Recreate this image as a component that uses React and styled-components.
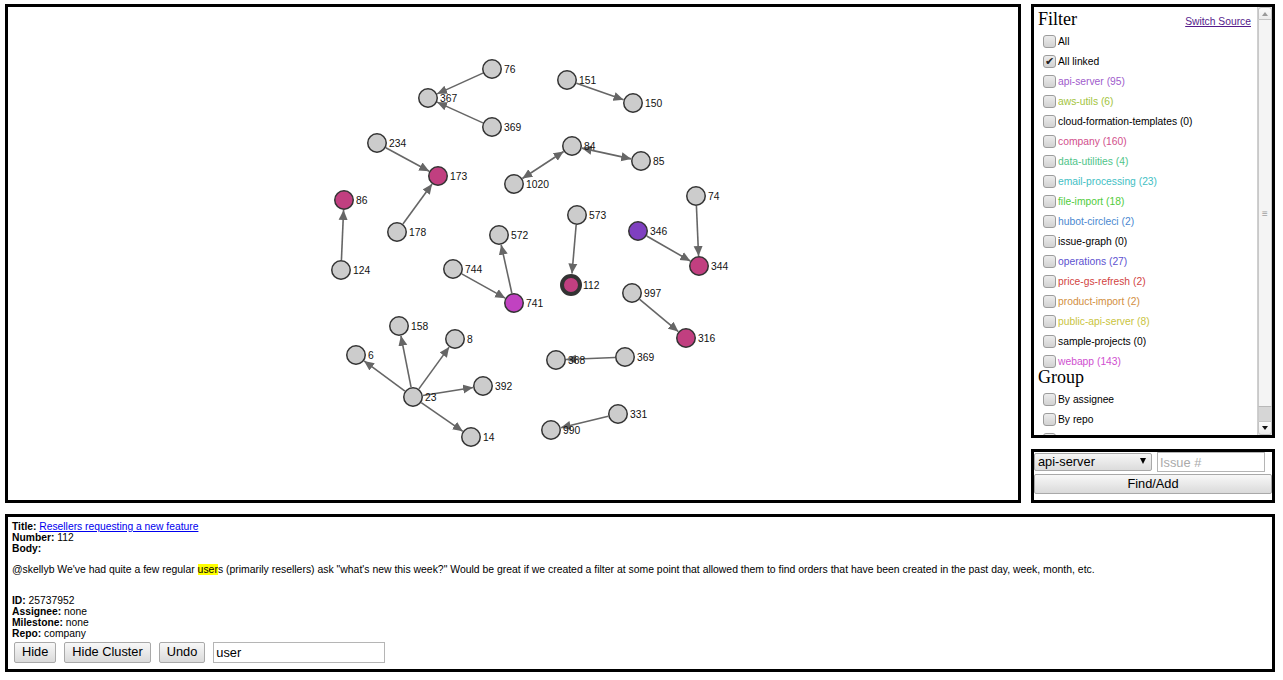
import React from 'react';
import styled, { createGlobalStyle } from 'styled-components';

const GlobalStyle = createGlobalStyle`
  html, body {
    margin: 0;
    padding: 0;
    background: #fff;
    font-family: "Liberation Sans", Arial, sans-serif;
    color: #000;
  }
`;

const PINK = '#c13f80';
const PURPLE = '#7f40c0';
const MAGENTA = '#c142c1';

const NODES = [
  { id: '76', x: 492, y: 69 },
  { id: '367', x: 428, y: 98 },
  { id: '369a', label: '369', x: 492, y: 127 },
  { id: '151', x: 567, y: 80 },
  { id: '150', x: 633, y: 103 },
  { id: '234', x: 377, y: 143 },
  { id: '173', x: 438, y: 176, fill: PINK },
  { id: '84', x: 572, y: 146 },
  { id: '85', x: 641, y: 161 },
  { id: '1020', x: 514, y: 184 },
  { id: '86', x: 344, y: 200, fill: PINK },
  { id: '178', x: 397, y: 232 },
  { id: '124', x: 341, y: 270 },
  { id: '573', x: 577, y: 215 },
  { id: '572', x: 499, y: 235 },
  { id: '346', x: 638, y: 231, fill: PURPLE },
  { id: '74', x: 696, y: 196 },
  { id: '344', x: 699, y: 266, fill: PINK },
  { id: '744', x: 453, y: 269 },
  { id: '741', x: 514, y: 303, fill: MAGENTA },
  { id: '112', x: 571, y: 285, fill: PINK, selected: true },
  { id: '997', x: 632, y: 293 },
  { id: '316', x: 686, y: 338, fill: PINK },
  { id: '158', x: 399, y: 326 },
  { id: '8', x: 455, y: 339 },
  { id: '6', x: 356, y: 355 },
  { id: '392', x: 483, y: 386 },
  { id: '23', x: 413, y: 397 },
  { id: '14', x: 471, y: 437 },
  { id: '368', x: 556, y: 360 },
  { id: '369b', label: '369', x: 625, y: 357 },
  { id: '331', x: 618, y: 414 },
  { id: '990', x: 551, y: 430 },
];

// [source, target, arrows on both ends]
const EDGES = [
  ['76', '367'],
  ['369a', '367'],
  ['151', '150'],
  ['234', '173'],
  ['178', '173'],
  ['84', '1020', true],
  ['84', '85', true],
  ['124', '86'],
  ['573', '112'],
  ['741', '572'],
  ['744', '741'],
  ['74', '344'],
  ['346', '344'],
  ['997', '316'],
  ['23', '158'],
  ['23', '8'],
  ['23', '6'],
  ['23', '392'],
  ['23', '14'],
  ['369b', '368'],
  ['331', '990'],
];

const REPOS = [
  { name: 'api-server', count: 95, color: '#a05ccc' },
  { name: 'aws-utils', count: 6, color: '#a3c43c' },
  { name: 'cloud-formation-templates', count: 0 },
  { name: 'company', count: 160, color: '#d24f8c' },
  { name: 'data-utilities', count: 4, color: '#4fc489' },
  { name: 'email-processing', count: 23, color: '#43c0c4' },
  { name: 'file-import', count: 18, color: '#52cc3c' },
  { name: 'hubot-circleci', count: 2, color: '#4a88d0' },
  { name: 'issue-graph', count: 0 },
  { name: 'operations', count: 27, color: '#5d52d0' },
  { name: 'price-gs-refresh', count: 2, color: '#d2443f' },
  { name: 'product-import', count: 2, color: '#d2903f' },
  { name: 'public-api-server', count: 8, color: '#c9c43e' },
  { name: 'sample-projects', count: 0 },
  { name: 'webapp', count: 143, color: '#cf4fcf' },
];

const Page = styled.div`
  padding: 4px 0 0 5px;
  width: 1270px;
`;

const TopRow = styled.div`
  display: flex;
  gap: 10px;
  height: 499px;
`;

const Framed = styled.div`
  border: 3px solid #000;
  box-sizing: border-box;
  background: #fff;
`;

const GraphBox = styled(Framed)`
  width: 1016px;
  height: 499px;
  overflow: hidden;

  svg {
    display: block;
    width: 100%;
    height: 100%;
  }
`;

const NodeLabel = styled.text`
  font-family: "Liberation Sans", Arial, sans-serif;
  font-size: 10.3px;
  fill: #111;
`;

const Side = styled.div`
  width: 244px;
  display: flex;
  flex-direction: column;
  gap: 11px;
`;

const FilterPanel = styled(Framed)`
  height: 434px;
  display: flex;
`;

const FilterContent = styled.div`
  flex: 1;
  overflow: hidden;
  padding: 2px 5px 0 4px;
`;

const FilterHeader = styled.div`
  display: flex;
  justify-content: space-between;
  align-items: baseline;
`;

const Heading = styled.div`
  font-family: "Liberation Serif", "Times New Roman", serif;
  font-size: 18px;
  line-height: 20px;
  margin: ${p => (p.$tight ? '-4px 0 2px' : '0 0 2px')};
`;

const SwitchLink = styled.a`
  font-size: 10.3px;
  color: #551a8b;
  text-decoration: underline;
  cursor: pointer;
  margin-right: 1px;
`;

const CheckRow = styled.label`
  display: flex;
  align-items: center;
  height: 20px;
  padding-left: 5px;
  font-size: 10.3px;
  color: ${p => p.$color || '#000'};
  white-space: nowrap;
`;

const CheckBox = styled.span`
  width: 13px;
  height: 13px;
  box-sizing: border-box;
  border: 1px solid #9c9c9c;
  border-radius: 3px;
  background: linear-gradient(#ececec, #d2d2d2);
  margin-right: 2px;
  flex: none;
  display: flex;
  align-items: center;
  justify-content: center;
  font-size: 11px;
  line-height: 1;
  color: #222;
`;

const ScrollBar = styled.div`
  width: 15px;
  flex: none;
  display: flex;
  flex-direction: column;
  background: #e4e4e4;
  border-left: 1px solid #cfcfcf;
  box-sizing: border-box;
`;

const ScrollButton = styled.div`
  height: ${p => p.$h}px;
  box-sizing: border-box;
  background: linear-gradient(#fbfbfb, #ececec);
  border: 1px solid #c4c4c4;
  border-radius: ${p => (p.$down ? '0 0 3px 3px' : '3px 3px 0 0')};
  display: flex;
  align-items: center;
  justify-content: center;
`;

const Arrow = styled.span`
  width: 0;
  height: 0;
  border-left: 3.5px solid transparent;
  border-right: 3.5px solid transparent;
  ${p =>
    p.$down
      ? 'border-top: 4px solid #111;'
      : 'border-bottom: 4px solid #9a9a9a;'}
`;

const Thumb = styled.div`
  flex: 1;
  background: #f4f4f4;
  border-left: 1px solid #c9c9c9;
  border-right: 1px solid #c9c9c9;
  border-bottom: 1px solid #b8b8b8;
  display: flex;
  align-items: center;
  justify-content: center;
  color: #a0a0a0;
  font-size: 10px;
`;

const Track = styled.div`
  height: 14px;
  background: #d6d6d6;
  border-left: 1px solid #c9c9c9;
  border-right: 1px solid #c9c9c9;
`;

const FindBox = styled(Framed)`
  height: 54px;
`;

const FindRow = styled.div`
  display: flex;
  align-items: flex-start;
  height: 22px;
`;

const SelectWrap = styled.div`
  position: relative;
  width: 118px;
  height: 18px;
`;

const Select = styled.select`
  appearance: none;
  width: 100%;
  height: 100%;
  margin: 0;
  border: 1px solid #a9a9a9;
  border-radius: 2px;
  background: linear-gradient(#f6f6f6, #dcdcdc);
  font-family: "Liberation Sans", Arial, sans-serif;
  font-size: 12.8px;
  padding: 0 0 0 3px;
  color: #000;
`;

const SelectArrow = styled.span`
  position: absolute;
  right: 6px;
  top: 6px;
  width: 0;
  height: 0;
  border-left: 3.5px solid transparent;
  border-right: 3.5px solid transparent;
  border-top: 6px solid #000;
  pointer-events: none;
`;

const TextInput = styled.input`
  box-sizing: border-box;
  width: ${p => p.$w}px;
  height: ${p => p.$h || 20}px;
  margin: 0 0 0 ${p => p.$gap || 0}px;
  border: 1px solid #b5b5b5;
  padding: 0 2px;
  font-family: "Liberation Sans", Arial, sans-serif;
  font-size: 12.8px;
  color: #000;
  background: #fff;

  &::placeholder {
    color: #aaa;
  }
`;

const Button = styled.button`
  box-sizing: border-box;
  height: ${p => p.$h || 20}px;
  width: ${p => (p.$full ? '100%' : 'auto')};
  padding: 0 7px;
  margin: 0;
  border: 1px solid #a9a9a9;
  border-radius: 2px;
  background: linear-gradient(#f8f8f8, #dadada);
  font-family: "Liberation Sans", Arial, sans-serif;
  font-size: 12.8px;
  color: #000;
  line-height: 1;
`;

const Details = styled(Framed)`
  margin-top: 11px;
  height: 158px;
  padding: 4px 4px 0;
  font-size: 10.3px;
  line-height: 11px;
`;

const Line = styled.div`
  white-space: nowrap;
`;

const TitleLink = styled.a`
  color: #0000ee;
  text-decoration: underline;
`;

const BodyText = styled.p`
  margin: 10px 0 20px;
  font-size: 10.43px;
  white-space: nowrap;
`;

const Mark = styled.span`
  background: #ffff00;
`;

const Actions = styled.div`
  display: flex;
  gap: 8px;
  margin: 3px 0 0 2px;
  align-items: center;
`;

function Graph() {
  const byId = Object.fromEntries(NODES.map(n => [n.id, n]));
  const outer = n => (n.selected ? 11.5 : 10);

  return (
    <svg viewBox="8 7 1010 493">
      <defs>
        <marker
          id="arrow"
          viewBox="0 -5 10 10"
          refX="10"
          refY="0"
          markerWidth="10"
          markerHeight="10"
          markerUnits="userSpaceOnUse"
          orient="auto-start-reverse"
        >
          <path d="M0,-4.5L10,0L0,4.5Z" fill="#666" />
        </marker>
      </defs>
      {EDGES.map(([s, t, both]) => {
        const a = byId[s];
        const b = byId[t];
        const dx = b.x - a.x;
        const dy = b.y - a.y;
        const len = Math.hypot(dx, dy);
        const ux = dx / len;
        const uy = dy / len;
        return (
          <line
            key={s + t}
            x1={a.x + ux * outer(a)}
            y1={a.y + uy * outer(a)}
            x2={b.x - ux * outer(b)}
            y2={b.y - uy * outer(b)}
            stroke="#666"
            strokeWidth="1.6"
            markerEnd="url(#arrow)"
            markerStart={both ? 'url(#arrow)' : undefined}
          />
        );
      })}
      {NODES.map(n => (
        <g key={n.id}>
          <circle
            cx={n.x}
            cy={n.y}
            r={n.selected ? 9 : 9.25}
            fill={n.fill || '#ccc'}
            stroke="#333"
            strokeWidth={n.selected ? 4 : 1.5}
          />
          <NodeLabel x={n.x + 12} y={n.y + 3.7}>
            {n.label || n.id}
          </NodeLabel>
        </g>
      ))}
    </svg>
  );
}

function Check({ checked, color, children }) {
  return (
    <CheckRow $color={color}>
      <CheckBox>{checked ? '✔' : null}</CheckBox>
      {children}
    </CheckRow>
  );
}

function FakeScrollbar() {
  return (
    <ScrollBar>
      <ScrollButton $h={13}>
        <Arrow />
      </ScrollButton>
      <Thumb>≡</Thumb>
      <Track />
      <ScrollButton $h={14} $down>
        <Arrow $down />
      </ScrollButton>
    </ScrollBar>
  );
}

export default function App() {
  return (
    <>
      <GlobalStyle />
      <Page>
        <TopRow>
          <GraphBox>
            <Graph />
          </GraphBox>
          <Side>
            <FilterPanel>
              <FilterContent>
                <FilterHeader>
                  <Heading>Filter</Heading>
                  <SwitchLink>Switch Source</SwitchLink>
                </FilterHeader>
                <Check>All</Check>
                <Check checked>All linked</Check>
                {REPOS.map(r => (
                  <Check key={r.name} color={r.color}>
                    {r.name} ({r.count})
                  </Check>
                ))}
                <Heading $tight>Group</Heading>
                <Check>By assignee</Check>
                <Check>By repo</Check>
                <Check>By milestone</Check>
              </FilterContent>
              <FakeScrollbar />
            </FilterPanel>
            <FindBox>
              <FindRow>
                <SelectWrap>
                  <Select defaultValue="api-server">
                    {REPOS.map(r => (
                      <option key={r.name}>{r.name}</option>
                    ))}
                  </Select>
                  <SelectArrow />
                </SelectWrap>
                <TextInput $w={108} $gap={5} placeholder="Issue #" />
              </FindRow>
              <Button $full>Find/Add</Button>
            </FindBox>
          </Side>
        </TopRow>
        <Details>
          <Line>
            <b>Title:</b> <TitleLink>Resellers requesting a new feature</TitleLink>
          </Line>
          <Line>
            <b>Number:</b> 112
          </Line>
          <Line>
            <b>Body:</b>
          </Line>
          <BodyText>
            @skellyb We've had quite a few regular <Mark>user</Mark>s (primarily resellers) ask
            "what's new this week?" Would be great if we created a filter at some point that
            allowed them to find orders that have been created in the past day, week, month,
            etc.
          </BodyText>
          <Line>
            <b>ID:</b> 25737952
          </Line>
          <Line>
            <b>Assignee:</b> none
          </Line>
          <Line>
            <b>Milestone:</b> none
          </Line>
          <Line>
            <b>Repo:</b> company
          </Line>
          <Actions>
            <Button $h={21}>Hide</Button>
            <Button $h={21}>Hide Cluster</Button>
            <Button $h={21}>Undo</Button>
            <TextInput $w={172} $h={21} defaultValue="user" />
          </Actions>
        </Details>
      </Page>
    </>
  );
}
